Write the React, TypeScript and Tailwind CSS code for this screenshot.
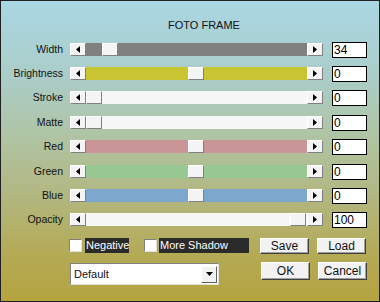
import React from "react";

const font = { fontFamily: '"Liberation Sans", Arial, sans-serif' };

function ArrowBtn({ dir }: { dir: "l" | "r" }) {
  return (
    <div className="w-[16px] h-[13px] bg-[#f4f4f4] border border-t-white border-l-white border-r-[#808080] border-b-[#808080] flex items-center justify-center shrink-0">
      <svg width="4" height="7" viewBox="0 0 4 7">
        {dir === "l" ? <path d="M4 0 L0 3.5 L4 7 Z" fill="#000" /> : <path d="M0 0 L4 3.5 L0 7 Z" fill="#000" />}
      </svg>
    </div>
  );
}

function Thumb() {
  return <div className="w-[16px] h-[13px] bg-[#f4f4f4] border border-t-white border-l-white border-r-[#808080] border-b-[#808080] shrink-0" />;
}

type Row = { label: string; color: string; pos: number; value: string };

const rows: Row[] = [
  { label: "Width", color: "#808080", pos: 16, value: "34" },
  { label: "Brightness", color: "#c9c432", pos: 102, value: "0" },
  { label: "Stroke", color: "#f6f6f6", pos: 0, value: "0" },
  { label: "Matte", color: "#f6f6f6", pos: 0, value: "0" },
  { label: "Red", color: "#c99597", pos: 102, value: "0" },
  { label: "Green", color: "#97c894", pos: 102, value: "0" },
  { label: "Blue", color: "#7ea7cd", pos: 102, value: "0" },
  { label: "Opacity", color: "#f6f6f6", pos: 204, value: "100" },
];

function SliderRow({ r }: { r: Row }) {
  return (
    <div className="flex items-center h-[13px]">
      <div className="w-[63px] text-right text-[10.5px] text-[#111] leading-none pr-[1px]">{r.label}</div>
      <div className="ml-[6px] flex">
        <ArrowBtn dir="l" />
        <div className="relative w-[221px] h-[13px]" style={{ backgroundColor: r.color }}>
          <div className="absolute top-0" style={{ left: r.pos }}>
            <Thumb />
          </div>
        </div>
        <ArrowBtn dir="r" />
      </div>
      <div className="ml-[9px] w-[35px] h-[16px] bg-white border border-black text-[12px] leading-[14px] pl-[1px] text-black">
        {r.value}
      </div>
    </div>
  );
}

function Btn({ children, h }: { children: React.ReactNode; h: string }) {
  return (
    <div
      className={`w-[49px] ${h} bg-[#f2f2f2] border border-t-white border-l-white border-r-[#404040] border-b-[#404040] shadow-[inset_-1px_-1px_0_#a0a0a0] flex items-center justify-center text-[12px] text-[#111]`}
      style={{ fontFamily: '"Liberation Sans Narrow", "Liberation Sans", Arial, sans-serif' }}
    >
      {children}
    </div>
  );
}

function Check() {
  return <div className="w-[13px] h-[13px] bg-white border border-t-[#808080] border-l-[#808080] border-r-[#e0e0e0] border-b-[#e0e0e0] shrink-0" />;
}

export default function App() {
  return (
    <div
      className="w-[380px] h-[302px] border border-[#202020] bg-[linear-gradient(to_bottom,#a9d7e4_0%,#abcdc8_25%,#afc4a4_45%,#b2b780_65%,#b4aa55_85%,#b5a43f_100%)] flex flex-col"
      style={font}
    >
      <div className="h-[42px] pt-[19px] pl-[167px] text-[11px] leading-[11px] text-[#111]">FOTO FRAME</div>
      <div className="flex flex-col">
        {rows.map((r, i) => (
          <div key={r.label} className={i === 7 ? "" : i === 2 || i === 4 ? "mb-[12px]" : "mb-[11px]"}>
            <SliderRow r={r} />
          </div>
        ))}
      </div>
      <div className="flex items-start mt-[12px]">
        <div className="ml-[68px] flex items-center h-[15px]">
          <Check />
          <div className="ml-[3px] h-[15px] w-[44px] bg-[#2a2a2a] text-white text-[11px] leading-[15px] pl-[1px]">Negative</div>
          <div className="ml-[15px]">
            <Check />
          </div>
          <div className="ml-[2px] h-[15px] w-[90px] bg-[#2a2a2a] text-white text-[11px] leading-[15px] pl-[1px]">More Shadow</div>
        </div>
        <div className="ml-[11px] flex gap-[8px]">
          <Btn h="h-[16px]">Save</Btn>
          <Btn h="h-[16px]">Load</Btn>
        </div>
      </div>
      <div className="flex items-start mt-[9px]">
        <div className="ml-[69px] w-[149px] h-[22px] bg-white border border-t-[#808080] border-l-[#808080] border-r-[#e0e0e0] border-b-[#e0e0e0] flex items-center justify-between pl-[3px] pr-[1px]">
          <span className="text-[11px] text-[#111]">Default</span>
          <div className="w-[16px] h-[17px] bg-[#f2f2f2] border border-t-white border-l-white border-r-[#606060] border-b-[#606060] flex items-center justify-center">
            <svg width="7" height="4" viewBox="0 0 7 4">
              <path d="M0 0 L7 0 L3.5 4 Z" fill="#000" />
            </svg>
          </div>
        </div>
        <div className="ml-[42px] -mt-[1px] flex gap-[8px]">
          <Btn h="h-[18px]">OK</Btn>
          <Btn h="h-[18px]">Cancel</Btn>
        </div>
      </div>
    </div>
  );
}
